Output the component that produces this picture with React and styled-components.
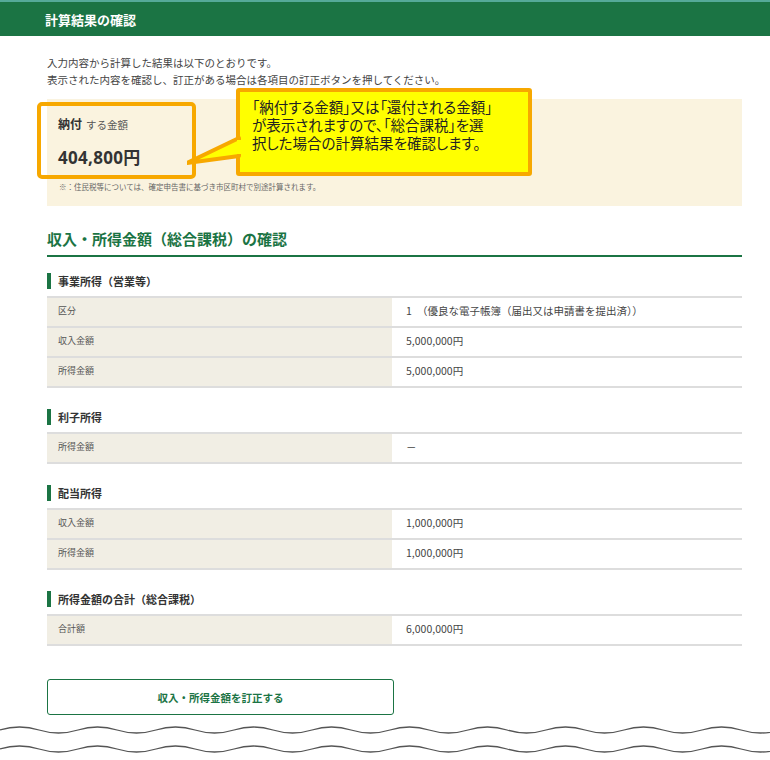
import React from "react";
import styled, { createGlobalStyle } from "styled-components";

const G = createGlobalStyle`
  body{margin:0;font-family:"Noto Sans CJK JP","Noto Sans",sans-serif;color:#333;background:#fff;}
`;
const Page = styled.div`width:770px;height:760px;overflow:hidden;position:relative;`;
const Header = styled.div`height:36px;background:#1b7444;border-top:2px solid #5a9;box-sizing:border-box;color:#fff;font-weight:bold;font-size:13px;display:flex;align-items:center;padding-left:45px;`;
const Main = styled.div`padding:18px 28px 0 47px;`;
const Intro = styled.p`margin:0;font-size:10.5px;line-height:17px;color:#444;`;
const Summary = styled.div`margin-top:11px;background:#faf3df;height:107px;position:relative;padding:16px 0 0 12px;box-sizing:border-box;`;
const AmountBox = styled.div`position:absolute;left:-10px;top:3px;width:159px;height:77px;border:4px solid #f7a800;border-radius:5px;box-sizing:border-box;padding:9px 0 0 17px;`;
const Label = styled.div`font-size:12px;font-weight:bold;color:#333;span{font-weight:normal;font-size:10.5px;color:#555;margin-left:4px;}`;
const Amount = styled.div`font-size:17px;font-weight:bold;margin-top:12px;color:#333;font-family:"Noto Sans",sans-serif;letter-spacing:.3px;span{font-family:"Noto Sans CJK JP";}`;
const Note = styled.div`position:absolute;left:12px;top:82px;font-size:7.5px;color:#666;`;
const Callout = styled.div`position:absolute;left:189px;top:-11px;width:296px;height:88px;background:#ffff00;border:4px solid #f7a800;border-radius:3px;box-sizing:border-box;font-size:14.5px;line-height:18px;color:#222;padding:6px 0 0 12px;z-index:2;font-feature-settings:"palt";white-space:nowrap;`;
const Tail = styled.svg`position:absolute;left:140px;top:37px;z-index:3;`;
const SectionTitle = styled.h2`margin:23px 0 0;font-size:15px;color:#1b7444;font-weight:bold;padding-bottom:6px;border-bottom:2px solid #1b7444;line-height:20px;`;
const Sub = styled.h3`margin:${p=>p.first?"16px":"21px"} 0 7px;font-size:11px;font-weight:bold;border-left:4px solid #1b7444;padding-left:7px;line-height:16px;color:#333;`;
const Table = styled.div`border-top:2px solid #ddd;`;
const Row = styled.div`display:grid;grid-template-columns:345px 1fr;height:28px;border-bottom:2px solid #ddd;font-size:9px;`;
const Th = styled.div`background:#f1eee4;padding:6px 0 0 11px;color:#555;`;
const Td = styled.div`padding:5px 0 0 14px;font-size:10.5px;color:#444;`;
const Button = styled.button`margin-top:33px;width:347px;height:36px;background:#fff;border:1.5px solid #1b7444;border-radius:3px;color:#1b7444;font-weight:bold;font-size:10.5px;font-family:inherit;`;
const Waves = styled.svg`position:absolute;left:0;top:718px;`;

const wave = (y) => {
  let d = `M0 ${y}`;
  for (let x = 0; x < 780; x += 78) d += ` q19.5 -6 39 0 t39 0`;
  return d;
};

const sections = [
  ["事業所得（営業等）", [["区分", "1　（優良な電子帳簿（届出又は申請書を提出済））"], ["収入金額", "5,000,000円"], ["所得金額", "5,000,000円"]]],
  ["利子所得", [["所得金額", "－"]]],
  ["配当所得", [["収入金額", "1,000,000円"], ["所得金額", "1,000,000円"]]],
  ["所得金額の合計（総合課税）", [["合計額", "6,000,000円"]]],
];

export default function App() {
  return (
    <Page>
      <G />
      <Header>計算結果の確認</Header>
      <Main>
        <Intro>入力内容から計算した結果は以下のとおりです。<br />表示された内容を確認し、訂正がある場合は各項目の訂正ボタンを押してください。</Intro>
        <Summary>
          <AmountBox>
            <Label>納付<span>する金額</span></Label>
            <Amount>404,800<span>円</span></Amount>
          </AmountBox>
          <Tail width="60" height="30" viewBox="0 0 60 30">
            <polygon points="52,2 0,27 52,20" fill="#ffff00" stroke="#f7a800" strokeWidth="4" strokeLinejoin="round" />
            <rect x="50" y="4" width="8" height="14" fill="#ffff00" />
          </Tail>
          <Callout>「納付する金額」又は「還付される金額」<br />が表示されますので、「総合課税」を選<br />択した場合の計算結果を確認します。</Callout>
          <Note>※：住民税等については、確定申告書に基づき市区町村で別途計算されます。</Note>
        </Summary>
        <SectionTitle>収入・所得金額（総合課税）の確認</SectionTitle>
        {sections.map(([t, rows], i) => (
          <div key={t}>
            <Sub first={i === 0}>{t}</Sub>
            <Table>
              {rows.map(([a, b]) => (
                <Row key={a}><Th>{a}</Th><Td>{b}</Td></Row>
              ))}
            </Table>
          </div>
        ))}
        <Button>収入・所得金額を訂正する</Button>
      </Main>
      <Waves width="770" height="40" viewBox="0 0 770 40">
        <rect x="0" y="0" width="770" height="40" fill="#fff" />
        <path d={wave(12)} fill="none" stroke="#555" strokeWidth="1.3" />
        <path d={wave(31)} fill="none" stroke="#555" strokeWidth="1.3" />
      </Waves>
    </Page>
  );
}
